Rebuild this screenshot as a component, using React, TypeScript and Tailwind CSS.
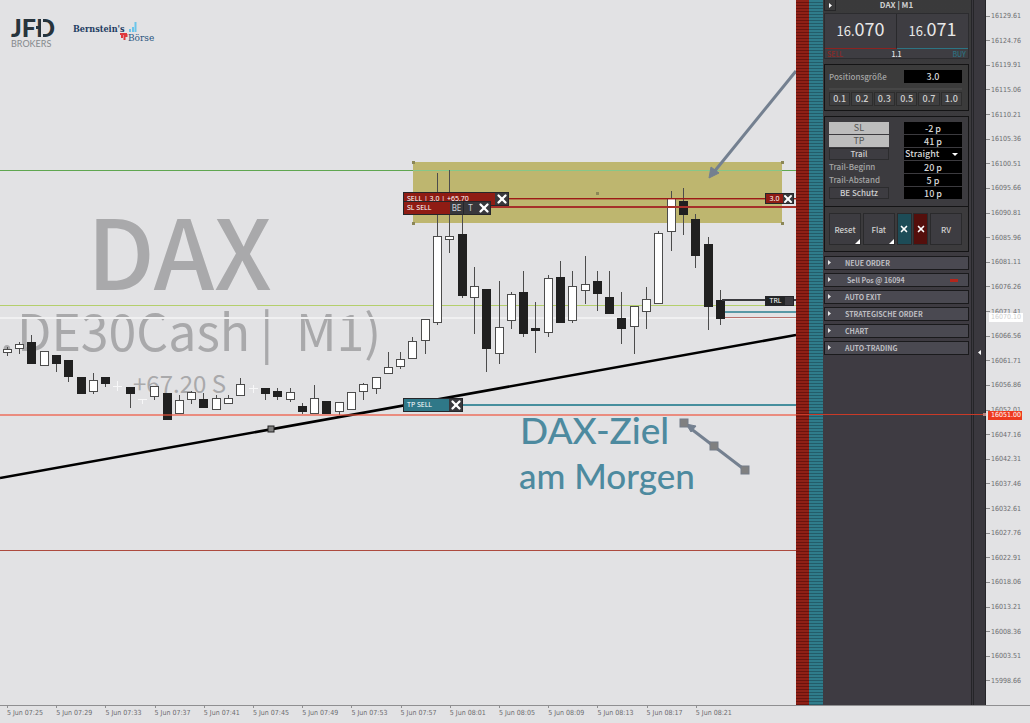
import { X } from "lucide-react";

// [wick high, body top, body bottom, wick low, kind]
// w = rising, b = falling, d = doji
type Candle = [number, number, number, number, "w" | "b" | "d"];

const candles: Candle[] = [
  [347, 350, 352, 355, "w"],
  [342, 345, 348, 353, "w"],
  [335, 342, 363, 363, "b"],
  [352, 352, 365, 365, "w"],
  [355, 355, 363, 371, "b"],
  [360, 360, 376, 381, "b"],
  [377, 377, 393, 393, "b"],
  [373, 381, 391, 393, "w"],
  [377, 377, 383, 386, "b"],
  [381, 386, 386, 391, "d"],
  [387, 387, 393, 407, "b"],
  [399, 399, 399, 404, "d"],
  [387, 387, 396, 399, "w"],
  [393, 393, 419, 419, "b"],
  [395, 401, 413, 413, "w"],
  [391, 393, 399, 403, "w"],
  [393, 399, 407, 407, "b"],
  [395, 399, 409, 409, "w"],
  [395, 399, 403, 403, "w"],
  [378, 385, 395, 395, "w"],
  [385, 388, 388, 393, "d"],
  [388, 388, 393, 399, "b"],
  [388, 391, 396, 399, "b"],
  [388, 393, 399, 401, "w"],
  [403, 406, 411, 413, "b"],
  [385, 399, 413, 413, "w"],
  [401, 401, 413, 413, "b"],
  [403, 403, 411, 414, "w"],
  [393, 393, 409, 409, "w"],
  [383, 385, 391, 399, "w"],
  [378, 378, 388, 393, "w"],
  [352, 368, 373, 373, "w"],
  [352, 360, 366, 368, "w"],
  [337, 342, 358, 358, "w"],
  [320, 320, 340, 353, "w"],
  [173, 237, 322, 324, "w"],
  [170, 237, 239, 252, "w"],
  [200, 234, 295, 297, "b"],
  [267, 287, 297, 333, "w"],
  [289, 289, 348, 371, "b"],
  [281, 328, 353, 363, "w"],
  [292, 295, 320, 328, "w"],
  [271, 292, 333, 336, "b"],
  [302, 328, 330, 352, "b"],
  [275, 279, 332, 336, "w"],
  [261, 277, 322, 322, "b"],
  [271, 287, 320, 322, "w"],
  [256, 285, 290, 303, "w"],
  [271, 281, 293, 310, "b"],
  [271, 297, 313, 313, "b"],
  [292, 318, 328, 343, "b"],
  [307, 307, 326, 353, "w"],
  [287, 300, 311, 328, "w"],
  [231, 234, 303, 303, "w"],
  [191, 199, 231, 250, "w"],
  [188, 201, 214, 234, "b"],
  [214, 219, 255, 267, "b"],
  [237, 244, 306, 329, "b"],
  [290, 300, 318, 324, "b"],
];

const prices = Array.from({ length: 28 }, (_, i) => (16129.61 - i * 4.85).toFixed(2));

const times = [
  "07:25", "07:29", "07:33", "07:37", "07:41", "07:45", "07:49", "07:53",
  "07:57", "08:01", "08:05", "08:09", "08:13", "08:17", "08:21",
];

const lots = ["0.1", "0.2", "0.3", "0.5", "0.7", "1.0"];

const sections = ["NEUE ORDER", "Sell Pos @ 16094", "AUTO EXIT", "STRATEGISCHE ORDER", "CHART", "AUTO-TRADING"];

function CandleShape({ candle, index }: { candle: Candle; index: number }) {
  const [high, top, bottom, low, kind] = candle;
  const x = Math.floor(7.3 + index * 12.293);
  if (kind === "d") {
    return (
      <g fill="#f7f7f8">
        <rect x={x} y={high} width="1" height={low - high} />
        <rect x={x - 4} y={top} width="9" height="1" />
      </g>
    );
  }
  return (
    <g>
      <rect x={x} y={high} width="1" height={low - high + 1} fill="#4c4c4c" />
      {kind === "w" ? (
        <rect x={x - 3.5} y={top - 0.5} width="8" height={bottom - top + 1} fill="#fff" stroke="#4c4c4c" />
      ) : (
        <rect x={x - 4} y={top} width="9" height={bottom - top + 1} fill="#202020" />
      )}
    </g>
  );
}

function Handle({ x, y, size = 8 }: { x: number; y: number; size?: number }) {
  return <rect x={x - size / 2} y={y - size / 2} width={size} height={size} fill="#808080" stroke="#747c88" />;
}

function Chart() {
  return (
    <svg viewBox="0 0 796 705" className="block h-auto w-full" aria-label="DAX M1 chart">
      <g fill="#a9a9ab" className="font-['Noto_Sans_CJK_SC',sans-serif]" fontWeight="500">
        <text x="87" y="290" fontSize="97">DAX</text>
        <g fontSize="50" fontWeight="400">
          <text x="0" y="351">.</text>
          <text x="17" y="351">DE30Cash</text>
          <text x="260" y="351">|</text>
          <text x="296" y="351">M1)</text>
        </g>
        <text x="133" y="393" fontSize="24" fontWeight="400">+67.20 S</text>
      </g>

      <rect x="413" y="162" width="369" height="61" fill="#beb66f" />
      <rect x="0" y="170" width="796" height="1" fill="#5fa650" />
      <rect x="413" y="170" width="369" height="1" fill="#86c78a" />
      <rect x="0" y="305" width="796" height="1" fill="#b4cf6c" />
      <rect x="0" y="317" width="796" height="2" fill="#f0f0f1" />
      <rect x="0" y="550" width="796" height="1" fill="#ad4a3e" />

      {candles.map((candle, i) => (
        <CandleShape key={i} candle={candle} index={i} />
      ))}

      <g fill="#9d1a16">
        <rect x="508" y="198" width="288" height="1" />
        <rect x="508" y="199" width="288" height="1" opacity="0.4" />
        <rect x="490" y="206" width="306" height="2" fill="#a6302a" />
        <rect x="725" y="317" width="71" height="1" fill="#b8716c" />
      </g>
      <rect x="722" y="299" width="74" height="2" fill="#3a3a3e" />
      <rect x="725" y="311" width="71" height="2" fill="#2a7f90" opacity="0.75" />

      <line x1="0" y1="478" x2="796" y2="335" stroke="#000" strokeWidth="2.500" />
      <rect x="268" y="426" width="6" height="6" fill="#808080" stroke="#222" />
      <rect x="463" y="404" width="333" height="2" fill="#2a7f90" opacity="0.85" />

      <g fill="#8c8757">
        <rect x="412" y="161" width="3" height="3" />
        <rect x="412" y="222" width="3" height="3" />
        <rect x="781" y="161" width="3" height="3" />
        <rect x="781" y="222" width="3" height="3" />
        <rect x="596" y="192" width="3" height="3" />
      </g>

      <g stroke="#748090" strokeWidth="3" fill="#748090">
        <line x1="796" y1="71" x2="714" y2="172" />
        <polygon points="709,178 711,167 719,173" strokeWidth="1" />
        <line x1="745" y1="470" x2="690" y2="428" />
        <polygon points="686,424 696,426 691,432" strokeWidth="1" />
      </g>
      <Handle x={684} y={423} />
      <Handle x={714} y={446} />
      <Handle x={745} y={470} />

      <g fill="#4d8a9f" fontWeight="500" className="font-[Lato,sans-serif]">
        <text x="520" y="444" fontSize="37">DAX-Ziel</text>
        <text x="519" y="489" fontSize="35">am Morgen</text>
      </g>
    </svg>
  );
}

function Logos() {
  return (
    <div className="absolute top-[14px] left-[11px] flex gap-[14px]">
      <svg width="48" height="36" viewBox="0 -2 48 36" className="overflow-visible" aria-label="JFD Brokers">
        <text x="0" y="21" fontSize="25" fontWeight="900" fill="#27343c" className="font-[Lato,sans-serif]">JFD</text>
        <path d="M31 2v20" stroke="#e2e2e4" strokeWidth="2" />
        <path d="M25 11.500h4" stroke="#27343c" strokeWidth="3" />
        <text x="0" y="31" fontSize="9" fill="#85898c" className="font-[Lato,sans-serif]">BROKERS</text>
      </svg>
      <svg width="84" height="36" viewBox="0 -2 84 36" aria-label="Bernstein's Börse">
        <g className="font-['DejaVu_Serif_Condensed','DejaVu_Serif',serif]">
          <text x="0" y="16" fontSize="9" fontWeight="700" fill="#1f3d63">Bernstein's</text>
          <text x="55" y="25" fontSize="10" fill="#2a5580">Börse</text>
        </g>
        <path d="M57 16v-3M60 16v-5M62.500 16V6" stroke="#6cc5ea" strokeWidth="2" />
        <path d="M47 18h7M49 18v4M51.500 18v6M53.500 18v3" stroke="#e0383c" strokeWidth="2" />
      </svg>
    </div>
  );
}

function CloseButton({ label }: { label: string }) {
  return (
    <button aria-label={label} className="flex w-[13px] shrink-0 items-center justify-center bg-[#38383c] text-white">
      <X size={14} strokeWidth={4} className="shrink-0" />
    </button>
  );
}

function OrderTags() {
  const tag = "absolute flex border border-[#26262a] text-[7px] leading-[12px] text-white";
  return (
    <div className="font-['Noto_Sans',sans-serif]">
      <div className={`${tag} top-[192px] left-[403px] h-[14px] w-[106px] bg-[#8f1c14]`}>
        <span className="grow pl-[3px]">SELL | 3.0 | +65.70</span>
        <CloseButton label="Close position" />
      </div>
      <div className={`${tag} top-[201px] left-[403px] h-[14px] w-[88px] bg-[#8f1c14]`}>
        <span className="grow pl-[3px]">SL SELL</span>
        <button className="w-[13px] bg-[#38383c] text-[8px] text-gray-300">BE</button>
        <button className="w-[14px] border-l border-[#26262a] bg-[#38383c] text-[8px] text-gray-300">T</button>
        <CloseButton label="Remove stop loss" />
      </div>
      <div className={`${tag} top-[398px] left-[403px] h-[14px] w-[60px] bg-[#2f7888]`}>
        <span className="grow pl-[3px]">TP SELL</span>
        <CloseButton label="Remove take profit" />
      </div>
      <div className={`${tag} top-[193px] right-[2px] h-[11px] w-[29px] bg-[#8f1c14]`}>
        <span className="grow text-center leading-[9px]">3.0</span>
        <button aria-label="Close 3.0" className="flex w-[10px] items-center justify-center bg-[#38383c]">
          <X size={12} strokeWidth={4} className="shrink-0" />
        </button>
      </div>
      <div className={`${tag} top-[296px] right-[2px] h-[10px] w-[29px] bg-[#222425]`}>
        <span className="grow text-center leading-[8px]">TRL</span>
        <span className="w-[8px] bg-[#3d3c41]" />
      </div>
    </div>
  );
}

function PriceBox() {
  return (
    <section className="h-[46px] border border-[#2c2c2f] bg-[#3e3d42] text-[#e8e8e8]">
      <div className="flex h-[35px] divide-x divide-[#29292c]">
        <button className="flex-1 border-b border-b-[#8c2320] pb-[4px] text-[13px] leading-[28px]">
          16.<span className="text-[18px]">070</span>
        </button>
        <button className="flex-1 border-b border-b-[#2c7584] pb-[4px] text-[13px] leading-[28px]">
          16.<span className="text-[18px]">071</span>
        </button>
      </div>
      <div className="flex justify-between px-[2px] text-[7px] leading-[10px] font-medium">
        <span className="w-[20px] text-[#8b2a26]">SELL</span>
        <span>1.1</span>
        <span className="w-[20px] text-right text-[#2d7180]">BUY</span>
      </div>
    </section>
  );
}

function ProtectBox() {
  const btn = "h-[12px] border border-[#2c2c2e] bg-[#3d3c41] text-[8px] font-medium text-[#d0d0d0]";
  const input = "h-[12px] w-full bg-black text-center font-medium text-[#d8d8d8]";
  const label = "text-[8px] leading-[12px] font-medium text-[#a5a5a5]";
  return (
    <section className="mt-[5px] h-[91px] border border-[#141415] bg-[#3c3b3f] pt-[5px] pr-[6px] pl-[4px]">
      <div className="grid grid-cols-[60px_58px] justify-between gap-y-px text-[9px] leading-[10px]">
        <button className="h-[12px] bg-[#bdbdbd] text-[#555]">SL</button>
        <input aria-label="SL" defaultValue="-2 p" className={input} />
        <button className="h-[12px] bg-[#bdbdbd] text-[#555]">TP</button>
        <input aria-label="TP" defaultValue="41 p" className={input} />
        <button className={btn}>Trail</button>
        <div className="relative h-[12px] bg-black font-medium text-[#d8d8d8]">
          <select aria-label="Trail mode" className="block h-[12px] w-full appearance-none bg-black pl-px">
            <option>Straight</option>
          </select>
          <svg viewBox="0 0 6 3" className="pointer-events-none absolute top-[5px] right-[4px] h-[3px] w-[6px]">
            <path d="M0 0h6L3 3z" fill="#fff" />
          </svg>
        </div>
        <label htmlFor="begin" className={label}>Trail-Beginn</label>
        <input id="begin" defaultValue="20 p" className={input} />
        <label htmlFor="distance" className={label}>Trail-Abstand</label>
        <input id="distance" defaultValue="5 p" className={input} />
        <button className={btn}>BE Schutz</button>
        <input aria-label="BE Schutz" defaultValue="10 p" className={input} />
      </div>
    </section>
  );
}

function Corner() {
  return (
    <svg viewBox="0 0 5 5" className="absolute right-0 bottom-0 h-[5px] w-[5px]">
      <path d="M5 0v5H0z" fill="#fff" />
    </svg>
  );
}

function Actions() {
  const btn = "relative w-[32px] border border-[#2a2a2c] bg-[#3d3c41] pt-[2px] text-[#d0d0d0]";
  return (
    <section className="flex h-[45px] justify-between border border-t-0 border-[#141415] bg-[#3c3b3d] py-[6px] pr-[6px] pl-[4px] text-[8px] font-medium">
      <button className={btn}>Reset<Corner /></button>
      <button className={btn}>Flat<Corner /></button>
      <button aria-label="Close buys" className="flex w-[15px] items-center justify-center border border-[#2a2a2c] bg-[#1d4c57] text-white">
        <X size={10} strokeWidth={4} />
      </button>
      <button aria-label="Close sells" className="flex w-[15px] items-center justify-center border border-[#2a2a2c] bg-[#540f0c] text-white">
        <X size={10} strokeWidth={4} />
      </button>
      <button className={btn}>RV</button>
    </section>
  );
}

function Panel() {
  return (
    <aside className="w-[148px] shrink-0 bg-linear-to-b from-[#3a3a3b] to-[#3e3b42] to-50% pr-[2px] pl-px font-['Noto_Sans_CJK_SC',sans-serif]">
      <header className="flex h-[13px] items-start text-[8px] leading-[10px] font-bold text-[#d0d0d0]">
        <button aria-label="Collapse" className="flex h-[11px] w-[12px] items-center justify-center border border-t-0 border-[#262628]">
          <svg viewBox="0 0 3 5" className="h-[5px] w-[3px]"><path d="M0 0v5l3-2.500z" fill="#fff" /></svg>
        </button>
        <h1 className="grow pr-[12px] text-center">DAX | M1</h1>
      </header>

      <PriceBox />

      <section className="mt-[5px] h-[47px] border border-[#141415] bg-[#3b3b3b] pt-[5px] pr-[6px] pl-[4px] text-[9px] font-medium">
        <div className="flex items-center justify-between">
          <label htmlFor="size" className="text-[8px] leading-[13px] text-[#a5a5a5]">Positionsgröße</label>
          <input id="size" defaultValue="3.0" className="h-[13px] w-[58px] bg-black text-center text-[#d8d8d8]" />
        </div>
        <div className="mt-[5px] h-[2px] bg-[#464646]" />
        <div className="mt-[2px] flex gap-px">
          {lots.map((lot) => (
            <button key={lot} className="h-[14px] flex-1 border border-[#2d2d2d] bg-[#3f3f40] leading-[12px] text-[#d0d0d0]">
              {lot}
            </button>
          ))}
        </div>
      </section>

      <ProtectBox />
      <Actions />

      <nav className="mt-[4px] flex flex-col gap-[3px]">
        {sections.map((name) => (
          <button
            key={name}
            className="flex h-[14px] items-center border border-[#1a1a1c] bg-[#4a4951] pl-[3px] text-left text-[7px] leading-[12px] font-bold text-[#bebec2]"
          >
            <svg viewBox="0 0 3 5" className="mb-[2px] h-[5px] w-[3px]"><path d="M0 0v5l3-2.500z" fill="#e8e8e8" /></svg>
            <span className={name.startsWith("Sell") ? "grow pl-[16px]" : "grow pl-[14px]"}>{name}</span>
            {name.startsWith("Sell") && <span className="mr-[10px] h-[3px] w-[8px] bg-[#b3261c]" />}
          </button>
        ))}
      </nav>
    </aside>
  );
}

function PriceScale() {
  return (
    <div className="relative flex w-[44px] shrink-0 flex-col justify-between pt-[11px] pb-[19px] text-[7px] leading-[10px] text-[#6c6c6f]">
      {prices.map((price) => (
        <div key={price} className="flex h-[10px] items-center gap-px">
          <span className="h-px w-[4px] bg-[#8a8a8c]" />
          {price}
        </div>
      ))}
      <span className="absolute top-[313px] left-[3px] h-[9px] w-[34px] bg-white pl-[2px] leading-[9px] text-[#cfcfcf]">16070.10</span>
      <span className="absolute top-[411px] left-[2px] h-[9px] w-[34px] bg-[#ee3a20] pl-[3px] leading-[9px] text-white">16051.00</span>
    </div>
  );
}

export default function App() {
  return (
    <main className="min-h-screen overflow-hidden bg-[#e2e2e4] font-['DejaVu_Sans_Condensed','DejaVu_Sans',sans-serif]">
      <div className="relative flex">
        <div className="relative min-w-0 flex-1">
          <Chart />
          <Logos />
          <OrderTags />
          <div className="absolute inset-x-0 top-[414px] h-[2px] bg-[#f0543c]/60" />
        </div>
        <div className="w-[13px] shrink-0 bg-[repeating-linear-gradient(#8f2016_0_2px,#6b120c_2px_3px)]" />
        <div className="w-[14px] shrink-0 bg-[repeating-linear-gradient(#2f7c8b_0_2px,#235c69_2px_3px)]" />
        <Panel />
        <div className="flex w-[15px] shrink-0 border-x border-[#252528] bg-[#3a383e] pl-px">
          <button aria-label="Show panel" className="flex grow items-start justify-center border-l border-[#252528] pt-[350px]">
            <svg viewBox="0 0 3 5" className="h-[5px] w-[3px]"><path d="M3 0v5L0 2.500z" fill="#fff" /></svg>
          </button>
        </div>
        <PriceScale />
        <div className="absolute top-[414px] right-[44px] h-px w-[190px] bg-[#c93a28]" />
        <div className="absolute top-[413px] right-[44px] size-[3px] bg-[#b5817b]" />
      </div>

      <footer className="border-t border-[#8f8f91] pl-[7px] text-[7px] leading-[10px] text-[#6c6c6f]">
        <ul className="grid w-[738px] grid-cols-15">
          {times.map((time) => (
            <li key={time} className="whitespace-nowrap">
              <span className="block h-[2px] w-px bg-[#8f8f91]" />
              5 Jun {time}
            </li>
          ))}
        </ul>
      </footer>
    </main>
  );
}
